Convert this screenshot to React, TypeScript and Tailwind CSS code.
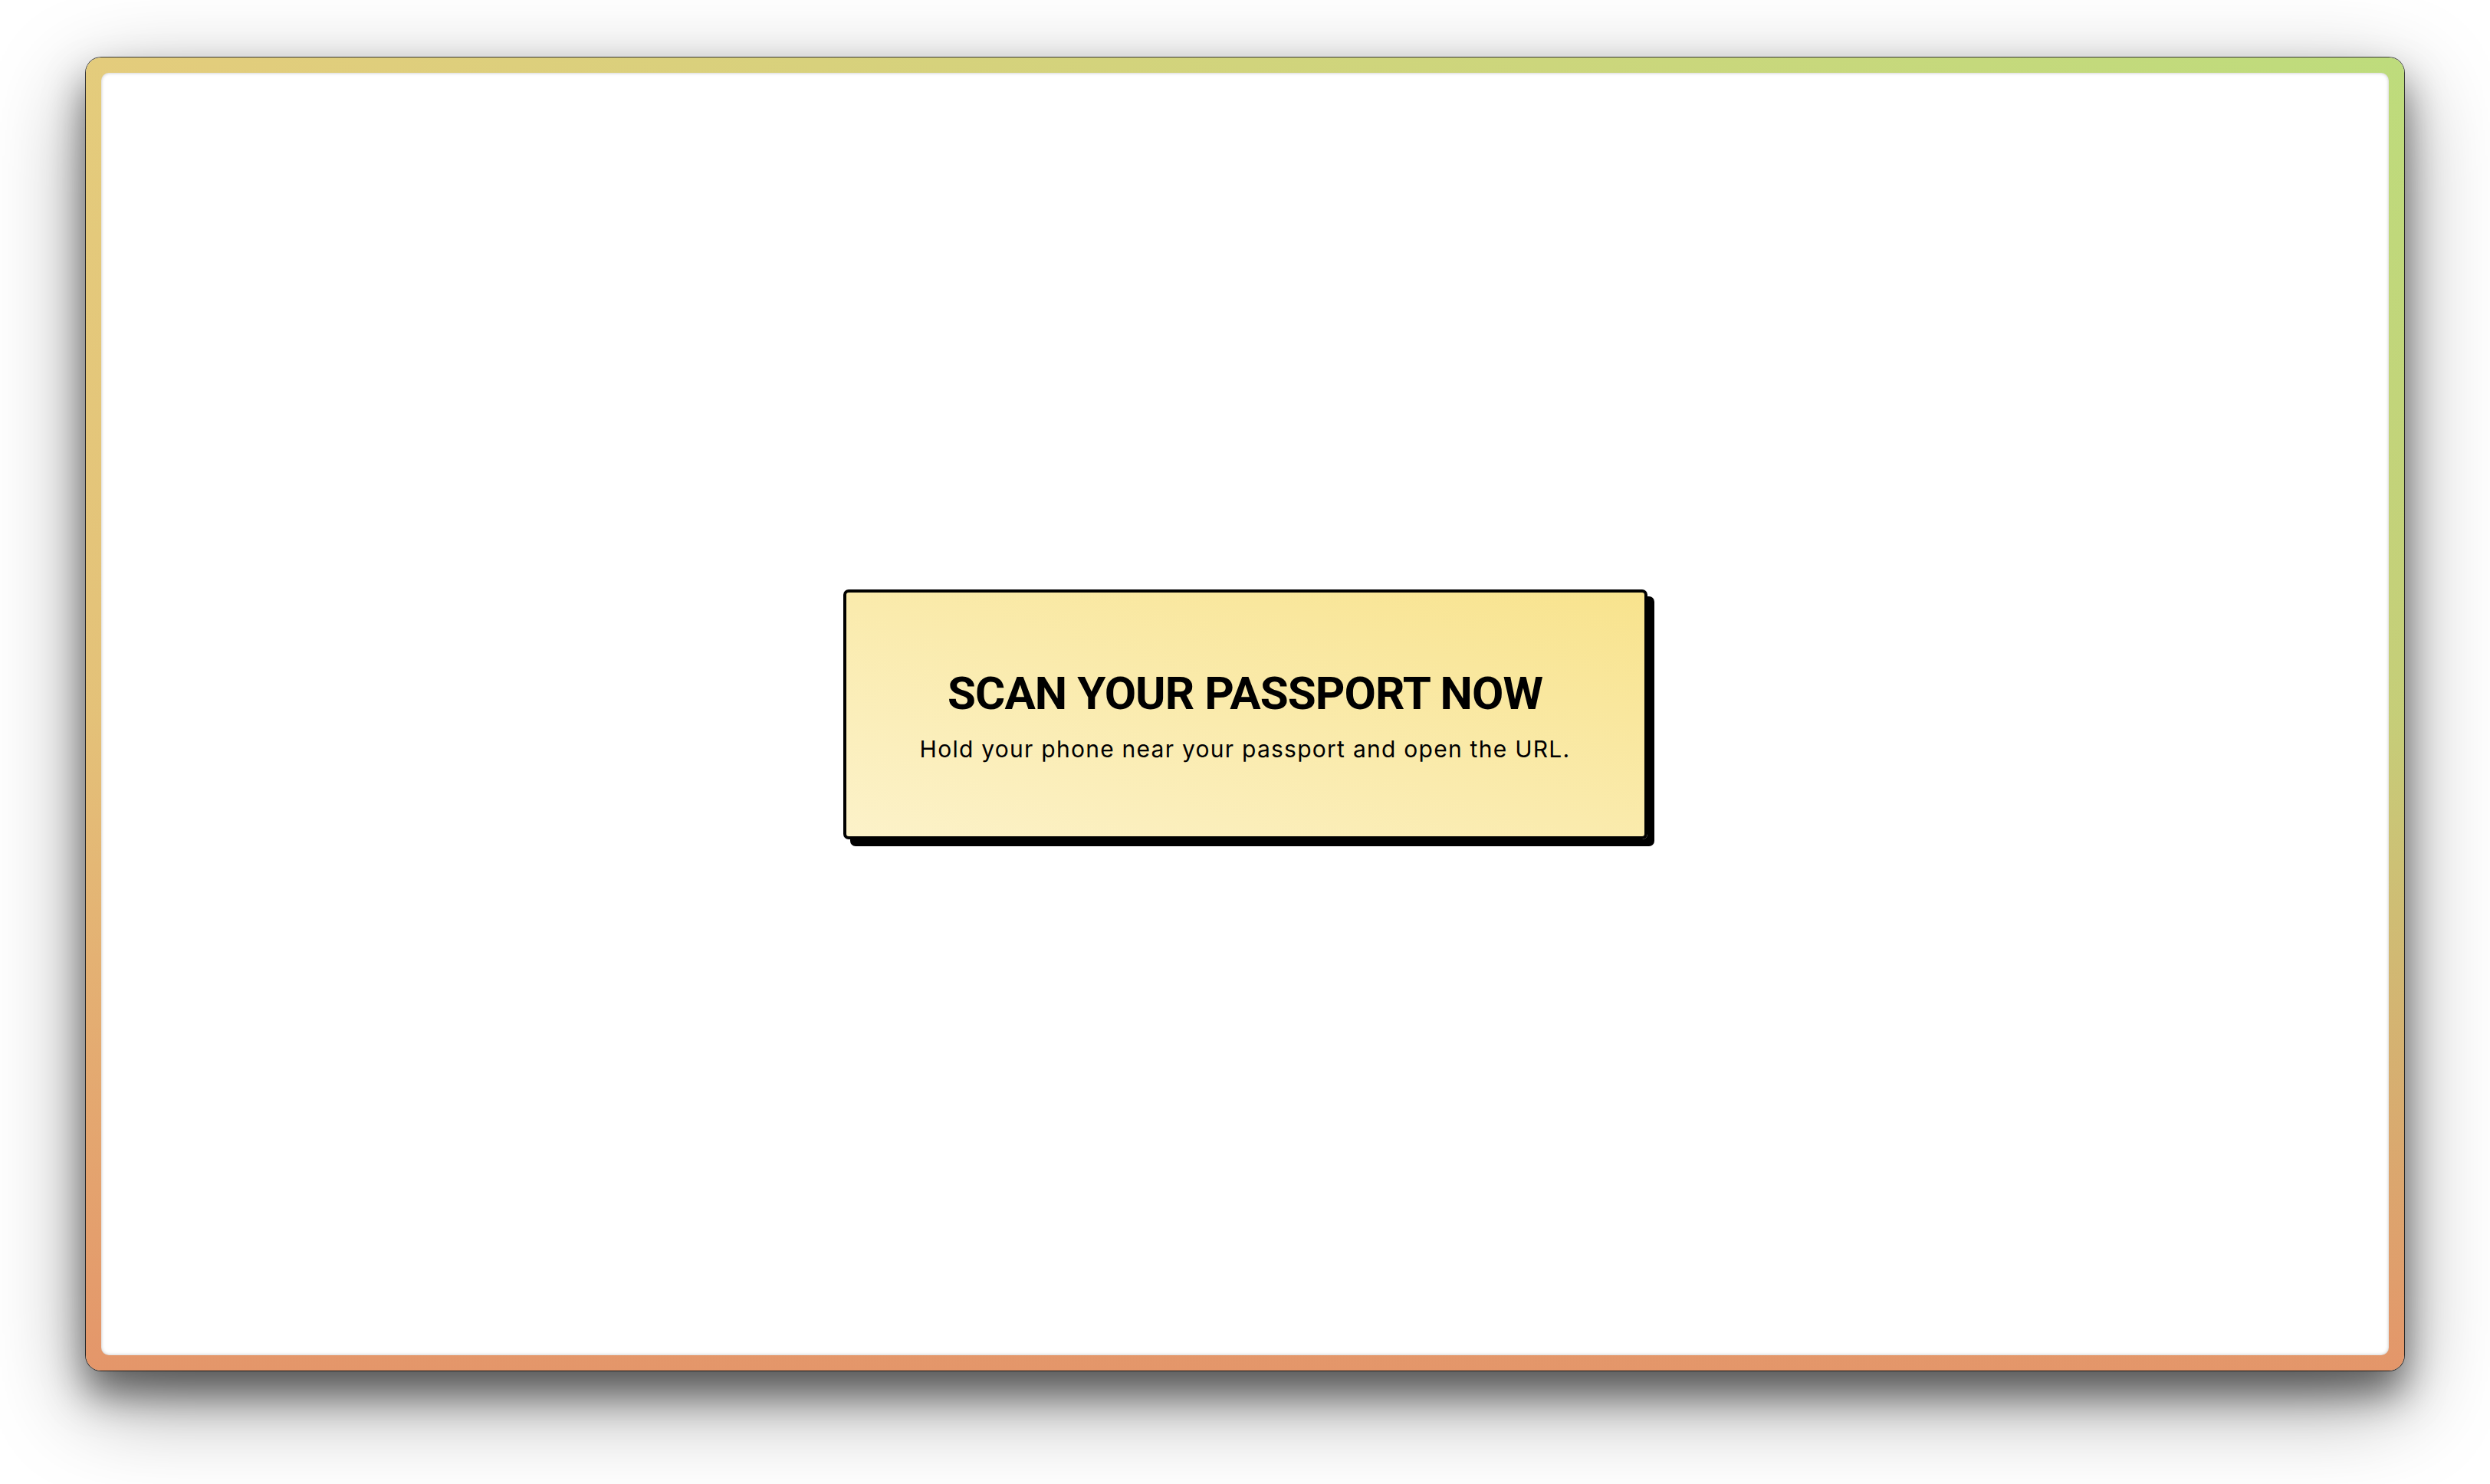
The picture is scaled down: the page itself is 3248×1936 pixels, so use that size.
const ScanCard = () => {
  return (
    <div className="w-[1049px] rounded-[7px] border-4 border-black bg-linear-to-tr from-[#fcf2c9] to-[#f8e38d] pt-[102px] pb-[99px] text-center text-black shadow-[9px_9px_0_0_#000]">
      <h1 className="font-['Roboto','Liberation_Sans',sans-serif] text-[60px] font-bold leading-none tracking-[-0.015em]">
        SCAN YOUR PASSPORT NOW
      </h1>
      <p className="mt-[27px] font-['Inter','Liberation_Sans',sans-serif] text-[30px] leading-none tracking-[0.042em]">
        Hold your phone near your passport and open the URL.
      </p>
    </div>
  );
};

export default function App() {
  return (
    <div className="flex min-h-screen justify-center bg-white pt-[75px]">
      <div className="h-[1713px] w-[3024px] rounded-[20px] bg-[linear-gradient(to_bottom,rgba(228,150,106,0)_0%,rgba(228,150,106,0.2)_50%,rgba(228,150,106,1)_100%),linear-gradient(to_right,#e4cc7c,#bedc7c)] p-[20px] shadow-[0_0_0_1px_rgba(0,0,0,0.75),0_30px_50px_rgba(0,0,0,0.5),0_40px_120px_rgba(0,0,0,0.4)]">
        <div className="flex h-full w-full items-center justify-center rounded-[10px] bg-white shadow-[inset_0_0_4px_rgba(0,0,0,0.25)]">
          <ScanCard />
        </div>
      </div>
    </div>
  );
}
